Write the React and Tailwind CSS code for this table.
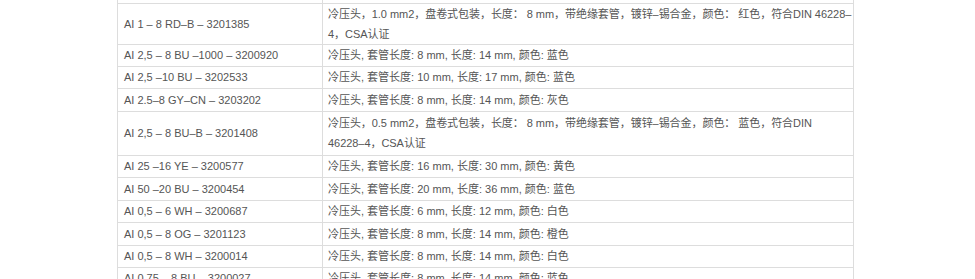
const rows = [
  {
    h: "h-[41px]",
    code: "AI 1 – 8 RD–B – 3201385",
    desc: ["冷压头，1.0 mm2，盘卷式包装，长度： 8 mm，带绝缘套管，镀锌–锡合金，颜色： 红色，符合DIN 46228–", "4，CSA认证"],
  },
  { h: "h-[22px]", code: "AI 2,5 – 8 BU –1000 – 3200920", desc: ["冷压头, 套管长度: 8 mm, 长度: 14 mm, 颜色: 蓝色"] },
  { h: "h-[22px]", code: "AI 2,5 –10 BU – 3202533", desc: ["冷压头, 套管长度: 10 mm, 长度: 17 mm, 颜色: 蓝色"] },
  { h: "h-[23px]", code: "AI 2.5–8 GY–CN – 3203202", desc: ["冷压头, 套管长度: 8 mm, 长度: 14 mm, 颜色: 灰色"] },
  {
    h: "h-[44px]",
    code: "AI 2,5 – 8 BU–B – 3201408",
    desc: ["冷压头，0.5 mm2，盘卷式包装，长度： 8 mm，带绝缘套管，镀锌–锡合金，颜色： 蓝色，符合DIN", "46228–4，CSA认证"],
  },
  { h: "h-[22px]", code: "AI 25 –16 YE – 3200577", desc: ["冷压头, 套管长度: 16 mm, 长度: 30 mm, 颜色: 黄色"] },
  { h: "h-[23px]", code: "AI 50 –20 BU – 3200454", desc: ["冷压头, 套管长度: 20 mm, 长度: 36 mm, 颜色: 蓝色"] },
  { h: "h-[22px]", code: "AI 0,5 – 6 WH – 3200687", desc: ["冷压头, 套管长度: 6 mm, 长度: 12 mm, 颜色: 白色"] },
  { h: "h-[23px]", code: "AI 0,5 – 8 OG – 3201123", desc: ["冷压头, 套管长度: 8 mm, 长度: 14 mm, 颜色: 橙色"] },
  { h: "h-[22px]", code: "AI 0,5 – 8 WH – 3200014", desc: ["冷压头, 套管长度: 8 mm, 长度: 14 mm, 颜色: 白色"] },
  { h: "h-[22px]", code: "AI 0,75 – 8 BU – 3200027", desc: ["冷压头, 套管长度: 8 mm, 长度: 14 mm, 颜色: 蓝色"] },
];

export default function App() {
  return (
    <div className="w-[975px] h-[279px] overflow-hidden bg-white">
      <table
        className="ml-[117px] w-[737px] table-fixed border-collapse text-[11px] leading-[20px] text-[#555]"
        style={{ fontFamily: '"Liberation Sans", "Noto Sans CJK SC", sans-serif' }}
      >
        <tbody>
          <tr className="h-[3px]">
            <td className="w-[205px] p-0 border-x border-[#ddd]"></td>
            <td className="p-0 border-x border-[#ddd]"></td>
          </tr>
          {rows.map((r) => (
            <tr key={r.code} className={r.h}>
              <td className="border border-[#ddd] pl-[6px] pr-[5px] py-0 align-middle whitespace-nowrap">{r.code}</td>
              <td className="border border-[#ddd] pl-[5px] pr-[4px] py-0 align-middle">
                {r.desc.map((line, i) => (
                  <div key={i} className={r.desc.length > 1 ? "whitespace-nowrap tracking-[-0.05px]" : "whitespace-nowrap"}>{line}</div>
                ))}
              </td>
            </tr>
          ))}
        </tbody>
      </table>
    </div>
  );
}
